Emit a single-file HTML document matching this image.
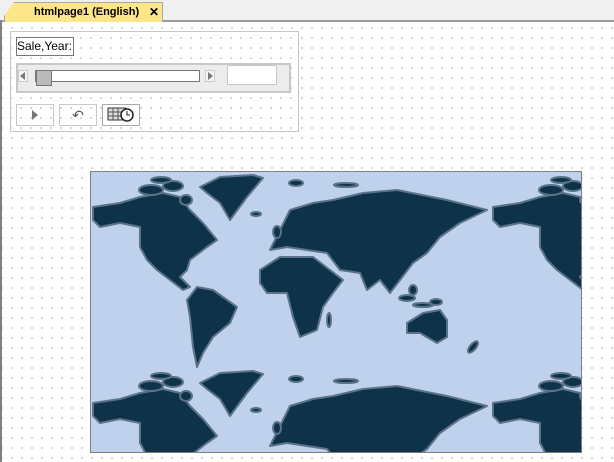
<!DOCTYPE html>
<html><head><style>
*{margin:0;padding:0;box-sizing:border-box}
body{width:614px;height:462px;overflow:hidden;background:#f0f0f0;font-family:"Liberation Sans",sans-serif;position:relative}
#tabbar{position:absolute;left:0;top:0;width:614px;height:21px;background:#f0f0f0}
#tab{position:absolute;left:4px;top:2px;width:159px;height:20px;background:#fde58a;border:1px solid #a8a8a8;border-bottom:none;clip-path:polygon(10px 0,100% 0,100% 100%,0 100%,0 14px)}
#tab span{position:absolute;left:29px;top:3px;font-size:11px;font-weight:bold;color:#000}
#tab b{position:absolute;left:144px;top:2px;font-size:12px}
#content{position:absolute;left:0;top:20px;width:614px;height:442px;border-top:2px solid #9a9a9a;border-left:2px solid #808080;background-color:#fff;
background-image:radial-gradient(circle,#777 0.7px,transparent 0.8px);background-size:10px 10px;background-position:-5px -9px}
#panel{position:absolute;left:10px;top:31px;width:289px;height:101px;border:1px solid #c6c6c6;background-color:#fff;
background-image:radial-gradient(circle,#777 0.7px,transparent 0.8px);background-size:10px 10px;background-position:-5px -9px}
.abs{position:absolute}
</style></head><body>
<div id="tabbar"></div>
<div id="content"></div>
<div id="tab"><span>htmlpage1 (English)</span><b>✕</b></div>
<div id="panel"></div>
<div class="abs" style="left:16px;top:37px;width:58px;height:19px;border:1px solid #777;background:#fff;font-size:12px;padding-left:0;line-height:17px;white-space:nowrap;overflow:hidden">Sale,Year:</div>
<div class="abs" style="left:16px;top:63px;width:275px;height:30px;background:#ececec;border:2px solid #c8c8c8"></div>
<div class="abs" style="left:18px;top:70px;width:10px;height:12px;background:#f4f4f4;border:1px solid #ccc"></div>
<div class="abs" style="left:20px;top:72px;width:0;height:0;border-top:4px solid transparent;border-bottom:4px solid transparent;border-right:5px solid #777"></div>
<div class="abs" style="left:35px;top:70px;width:165px;height:12px;background:#fff;border:1px solid #777"></div>
<div class="abs" style="left:36px;top:70px;width:16px;height:16px;background:#bbb;border:1px solid #777"></div>
<div class="abs" style="left:205px;top:70px;width:10px;height:12px;background:#f4f4f4;border:1px solid #ccc"></div>
<div class="abs" style="left:208px;top:72px;width:0;height:0;border-top:4px solid transparent;border-bottom:4px solid transparent;border-left:5px solid #777"></div>
<div class="abs" style="left:227px;top:65px;width:50px;height:20px;background:#fff;border:1px solid #c8c8c8"></div>
<div class="abs" style="left:16px;top:104px;width:38px;height:22px;border:1px solid #c8c8c8"></div>
<div class="abs" style="left:32px;top:110px;width:0;height:0;border-top:5px solid transparent;border-bottom:5px solid transparent;border-left:6px solid #777"></div>
<div class="abs" style="left:59px;top:104px;width:38px;height:22px;border:1px solid #c8c8c8;font-size:14px;color:#555;text-align:center;line-height:20px">↶</div>
<div class="abs" style="left:102px;top:104px;width:38px;height:22px;border:1px solid #aaa;background:#fff"></div>
<svg class="abs" style="left:107px;top:106px" width="28" height="17"><rect x="1" y="2" width="18" height="12" fill="#ddd" stroke="#333"/><path d="M1 6H19M1 10H19M6 2V14M11 2V14" stroke="#555"/><circle cx="20" cy="9" r="6" fill="#fff" stroke="#222" stroke-width="1.5"/><path d="M20 5V9H23" stroke="#222" fill="none"/></svg>
<svg class="abs" style="left:90px;top:171px" width="492" height="282">
<defs>
<pattern id="p" x="1" y="1" width="400" height="196" patternUnits="userSpaceOnUse">
<g fill="#0d3249" stroke="#5a7388" stroke-width="2" stroke-linejoin="round">
<polygon points="2,35 29,31 49,25 72,21 89,25 99,38 112,51 126,68 116,75 99,88 96,98 89,105 99,115 92,118 79,108 66,98 56,88 49,75 49,55 29,51 9,55 2,48"/>
<polygon points="109,15 129,5 162,3 172,6 156,25 139,48 129,31 116,21"/>
<ellipse cx="60" cy="18" rx="12" ry="5"/><ellipse cx="82" cy="14" rx="10" ry="5"/><ellipse cx="95" cy="28" rx="6" ry="5"/><ellipse cx="70" cy="8" rx="10" ry="3"/>
<polygon points="96,128 106,115 122,118 146,135 139,151 122,165 112,181 106,195 102,175 99,145"/>
<polygon points="169,98 189,85 222,85 239,98 252,108 242,121 232,135 226,158 209,165 202,145 196,121 176,121 169,111"/>
<polygon points="179,78 189,58 199,38 222,31 242,28 272,21 306,18 356,28 396,38 369,51 349,65 336,81 322,91 309,108 299,121 289,108 276,118 269,101 249,98 236,81 216,78 196,75"/>
<polygon points="316,151 332,141 349,138 356,148 356,165 346,171 329,161 316,161"/>
<ellipse cx="316" cy="126" rx="8" ry="3"/><ellipse cx="332" cy="133" rx="10" ry="2"/><ellipse cx="345" cy="130" rx="6" ry="3"/><ellipse cx="322" cy="118" rx="4" ry="5"/>
<ellipse cx="238" cy="148" rx="2" ry="7"/><ellipse cx="382" cy="175" rx="3" ry="7" transform="rotate(40 382 175)"/>
<ellipse cx="255" cy="13" rx="12" ry="2"/><ellipse cx="205" cy="11" rx="7" ry="3"/><ellipse cx="165" cy="42" rx="5" ry="2"/><ellipse cx="186" cy="60" rx="4" ry="6"/>
</g></pattern></defs>
<rect x="0.5" y="0.5" width="491" height="281" fill="#bfd1ec" stroke="#7f7f7f"/>
<rect x="1" y="1" width="490" height="280" fill="url(#p)"/>
</svg>
</body></html>
